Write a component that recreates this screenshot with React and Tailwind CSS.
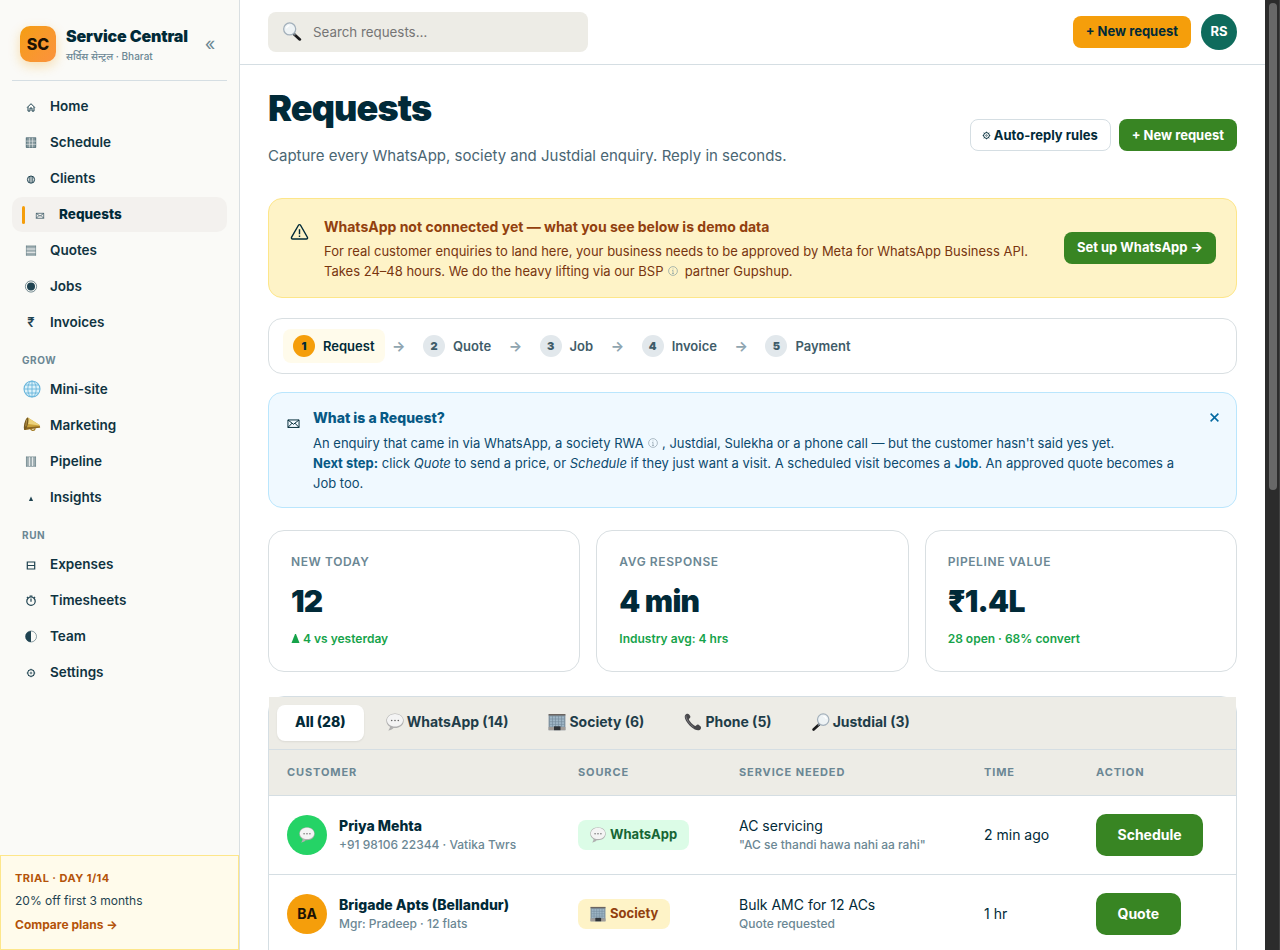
import { useState } from 'react';
import clsx from 'clsx';

function Glyph({ name, className }) {
  const shapes = {
    home: (
      <path d="M1.200 5.500 5 1.700l3.800 3.800M2 4.900v4.200h2V6h2v3.100h2V4.900" fill="none" stroke="currentColor" strokeWidth="1" />
    ),
    schedule: (
      <g stroke="currentColor" strokeWidth="0.5">
        <rect x="0.1" y="-0.2" width="9.800" height="9.800" fill="currentColor" fillOpacity="0.55" />
        <path d="M3.4-.2v9.800M6.600-.2v9.800M0 3.100h10M0 6.300h10" stroke="#fafaf7" strokeOpacity="0.75" strokeWidth="0.7" />
      </g>
    ),
    clients: (
      <g fill="none" stroke="currentColor">
        <circle cx="5" cy="5.600" r="3.600" strokeWidth="1" />
        <path d="M3.300 2.700v5.800M5 2.200v6.800M6.700 2.700v5.800" strokeWidth="0.8" />
      </g>
    ),
    mail: (
      <path d="M1.300 3.300h7.400v5H1.300zM1.300 3.300 5 6.200l3.700-2.900M1.300 8.300l2.800-2.900M8.700 8.300 5.900 5.400" fill="none" stroke="currentColor" strokeWidth="0.65" />
    ),
    quotes: (
      <g transform="translate(0 -.4)">
        <rect width="10" height="10" fill="currentColor" fillOpacity="0.42" />
        <path d="M0 .4h10M0 9.600h10M.3 0v10M9.700 0v10" stroke="currentColor" strokeOpacity=".4" strokeWidth=".6" />
        <path d="M.6 3.400h8.800M.6 6.700h8.800" stroke="#fff" strokeWidth=".8" />
      </g>
    ),
    jobs: (
      <g transform="translate(0 -.5)">
        <circle cx="5" cy="5" r="5.600" fill="none" stroke="currentColor" strokeWidth=".6" />
        <circle cx="5" cy="5" r="4" fill="currentColor" />
      </g>
    ),
    pipeline: (
      <g transform="translate(0 -.4)">
        <rect width="10" height="10" fill="currentColor" fillOpacity="0.42" />
        <path d="M.4 0v10M9.600 0v10M0 .3h10M0 9.700h10" stroke="currentColor" strokeOpacity=".4" strokeWidth=".6" />
        <path d="M3.400.6v8.800M6.600.6v8.800" stroke="#fff" strokeWidth=".8" />
      </g>
    ),
    insights: <path d="M5 3.500 7.100 7.900H2.900z" fill="currentColor" />,
    expenses: (
      <path d="M1.300 2h7.400v7H1.300zM1.300 5.500h7.400" fill="none" stroke="currentColor" strokeWidth="1.200" />
    ),
    timesheets: (
      <g fill="none" stroke="currentColor" strokeWidth="1.200">
        <circle cx="5" cy="5.200" r="4.200" />
        <path d="M5 2.600v3.200M3.600.2h2.800M.9 1.900 2 .8M9.100 1.900 8 .8" />
      </g>
    ),
    team: (
      <g transform="translate(0 -.5)">
        <circle cx="5" cy="5" r="5.500" fill="none" stroke="currentColor" strokeWidth=".5" />
        <path d="M5-.5a5.500 5.500 0 0 0 0 11z" fill="currentColor" />
      </g>
    ),
    gear: (
      <g fill="none" stroke="currentColor">
        <circle cx="5" cy="5" r="3.200" strokeWidth="1.100" />
        <circle cx="5" cy="5" r=".9" strokeWidth=".7" />
        <path d="M5 .8v1.100M5 8.100v1.100M.8 5h1.100M8.100 5h1.100M2 2l.8.800M7.200 7.200l.8.800M8 2l-.8.800M2.800 7.200l-.8.800" strokeWidth="1" />
      </g>
    ),
  };
  return (
    <svg viewBox="0 0 10 10" className={clsx('overflow-visible shrink-0', className)} aria-hidden="true">
      {shapes[name]}
    </svg>
  );
}

function Globe({ className }) {
  return (
    <svg viewBox="0 0 18 18" className={className} fill="none" aria-hidden="true">
      <circle cx="9" cy="9" r="8" fill="#d9f1fb" stroke="#4fa9d6" strokeWidth="1.100" />
      <path d="M9 1v16M1 9h16M2.500 5h13M2.500 13h13" stroke="#4fa9d6" strokeWidth=".9" />
      <ellipse cx="9" cy="9" rx="4.200" ry="7.900" stroke="#4fa9d6" strokeWidth=".9" />
    </svg>
  );
}

function Megaphone({ className }) {
  return (
    <svg viewBox="0 0 18 18" className={className} aria-hidden="true">
      <path d="M7.500 12.500c-.1 3 4 4 5 .5" fill="none" stroke="#a37c25" strokeWidth="1.300" />
      <path d="M4.500 1.500 17 9.500l.6 2.700L.8 14.800z" fill="#c9a13a" />
      <path d="M4.500 1.500 17 9.500l.1.600L5 8.500z" fill="#ecd27a" />
      <path d="m2 12.200 15.400-1.400.2 1.400L.8 14.800z" fill="#8a6520" />
      <ellipse cx="2.800" cy="8.200" rx="1.900" ry="6.800" fill="#76591f" transform="rotate(14 2.800 8.200)" />
      <path d="M3.400 3.800 2.400 11" stroke="#c8a65a" strokeWidth=".8" />
    </svg>
  );
}

function Magnifier({ className, flip }) {
  return (
    <svg viewBox="0 0 18 18" className={clsx(className, flip && '-scale-x-100')} aria-hidden="true">
      <path d="m11 11.500 5.400 5" stroke="#1b1b1d" strokeWidth="2.600" strokeLinecap="round" />
      <path d="m10 10.400 2.200 2" stroke="#77808a" strokeWidth="1.500" />
      <circle cx="6.800" cy="6.600" r="5.700" fill="#eef3f5" stroke="#a3b0bb" strokeWidth="1.200" />
      <path d="M3.700 6a3.300 3.300 0 0 1 3-2.600" fill="none" stroke="#fff" strokeWidth="1.200" />
    </svg>
  );
}

function SpeechBubble({ className }) {
  return (
    <svg viewBox="0 0 18 18" className={className} aria-hidden="true">
      <path d="M9 .4C4.200.4.3 3.500.3 7.700c0 2.600 1.500 4.800 3.700 6-.1 1.500-.9 2.900-1.900 3.700 2.200 0 4.200-1 5.400-2.500l1.500.1c4.800 0 8.700-3.100 8.700-7.300S13.800.4 9 .4z" fill="#b0b0b0" />
      <path d="M9 .9C4.500.9 1 3.700 1 7.200c0 3.500 3.500 6.300 8 6.300s8-2.800 8-6.300S13.500.9 9 .9z" fill="#f4f4f4" />
      <circle cx="5.700" cy="7.500" r=".8" fill="#666" />
      <circle cx="9" cy="7.500" r=".8" fill="#666" />
      <circle cx="12.300" cy="7.500" r=".8" fill="#666" />
    </svg>
  );
}

function OfficeBuilding({ className }) {
  return (
    <svg viewBox="0 0 18 18" className={className} aria-hidden="true">
      <path d="M.6 1.500h16.800v15.700H.6z" fill="#8295a3" />
      <path d="M.6 1h16.800v1.500H.6z" fill="#6b6460" />
      <path d="M2 3.500h14v10H2z" fill="#9fb6c6" />
      <path d="M4.500 3v11M7.500 3v11M10.500 3v11M13.500 3v11M1.500 6h15M1.500 8.700h15M1.500 11.400h15" stroke="#738a9b" strokeWidth=".6" />
      <path d="M.6 14h16.800v3.200H.6z" fill="#a19c98" />
      <path d="M6 13.300h6.500v3.900H6z" fill="#2f3338" />
    </svg>
  );
}

function Receiver({ className }) {
  return (
    <svg viewBox="0 0 18 18" className={className} aria-hidden="true">
      <path d="M2 1.200C.3 2 .3 4.700 2 7.700c2 3.500 5.300 7 8.800 8.700 2.700 1.300 5.200 1 5.900-.5.500-1.100.4-2-.3-2.700l-1.800-1.500c-.8-.6-1.600-.3-2.200.6-.6.800-1.200.9-2.200.2C8 11 6.200 8.900 5.200 7.200c-.5-1-.3-1.500.4-2 .8-.6 1-1.300.6-2.200L5.100 1.400C4.400.6 3.200.6 2 1.200z" fill="#48484b" />
      <path d="M2 2.600c-.5 2.600 3.200 8.400 7.500 11.400" fill="none" stroke="#85858a" strokeWidth=".8" />
    </svg>
  );
}

function Info({ className }) {
  return (
    <svg viewBox="0 0 10 10" fill="none" stroke="currentColor" className={clsx('inline-block w-[10px] h-[10px] relative -top-px', className)} aria-hidden="true">
      <circle cx="5" cy="5" r="4.400" strokeWidth=".8" />
      <path d="M5 4.300v3.200M5 2.500v.9M4.200 4.500H5M4 7.500h2" strokeWidth=".8" />
    </svg>
  );
}

const MAIN_NAV = [
  { label: 'Home', icon: 'home' },
  { label: 'Schedule', icon: 'schedule' },
  { label: 'Clients', icon: 'clients' },
  { label: 'Requests', icon: 'mail', active: true },
  { label: 'Quotes', icon: 'quotes' },
  { label: 'Jobs', icon: 'jobs' },
  { label: 'Invoices', icon: 'rupee' },
];
const GROW_NAV = [
  { label: 'Mini-site', icon: 'globe' },
  { label: 'Marketing', icon: 'megaphone' },
  { label: 'Pipeline', icon: 'pipeline' },
  { label: 'Insights', icon: 'insights' },
];
const RUN_NAV = [
  { label: 'Expenses', icon: 'expenses' },
  { label: 'Timesheets', icon: 'timesheets' },
  { label: 'Team', icon: 'team' },
  { label: 'Settings', icon: 'gear' },
];

const STEPS = ['Request', 'Quote', 'Job', 'Invoice', 'Payment'];

const STATS = [
  { label: 'NEW TODAY', value: '12', note: '4 vs yesterday', up: true },
  { label: 'AVG RESPONSE', value: '4 min', note: 'Industry avg: 4 hrs' },
  { label: 'PIPELINE VALUE', value: '₹1.4L', note: '28 open · 68% convert' },
];

const TABS = [
  { label: 'All (28)' },
  { label: 'WhatsApp (14)', Icon: SpeechBubble },
  { label: 'Society (6)', Icon: OfficeBuilding },
  { label: 'Phone (5)', Icon: Receiver },
  { label: 'Justdial (3)', Icon: Magnifier, flip: true },
];

const ROWS = [
  {
    name: 'Priya Mehta', detail: '+91 98106 22344 · Vatika Twrs', avatar: null,
    source: 'WhatsApp', service: 'AC servicing', note: '"AC se thandi hawa nahi aa rahi"',
    time: '2 min ago', action: 'Schedule',
  },
  {
    name: 'Brigade Apts (Bellandur)', detail: 'Mgr: Pradeep · 12 flats', avatar: 'BA',
    source: 'Society', service: 'Bulk AMC for 12 ACs', note: 'Quote requested',
    time: '1 hr', action: 'Quote',
  },
];

function NavIcon({ icon }) {
  if (icon === 'globe') return <Globe className="w-[18px] h-[18px] ml-px mb-[2px] shrink-0 opacity-85" />;
  if (icon === 'megaphone') return <Megaphone className="w-[18px] h-[17px] ml-px mb-[2px] shrink-0" />;
  if (icon === 'rupee') return <span className="text-[13px] font-semibold">₹</span>;
  return <Glyph name={icon} className="w-[10px] h-[10px]" />;
}

function NavItem({ label, icon, active }) {
  return (
    <a
      href="#"
      className={clsx(
        'flex items-center h-[35px] mb-px px-[10px] rounded-[10px] text-[13.5px]',
        active ? 'bg-[#f3f1ee] font-extrabold text-[#012a38]' : 'font-semibold text-[#0f3341]'
      )}
    >
      {active && <span className="w-[3px] h-[18px] mr-[6px] rounded-[2px] bg-[#f59e0b]" />}
      <span className="w-[18px] mr-[10px] flex items-center justify-center text-[#1f4351]">
        <NavIcon icon={icon} />
      </span>
      {label}
    </a>
  );
}

function NavHeading({ children }) {
  return (
    <div className="h-[31px] pt-[12px] px-[10px] text-[10px] leading-[14px] font-bold tracking-[0.06em] text-[#6b8794]">
      {children}
    </div>
  );
}

function Sidebar() {
  return (
    <aside className="w-[240px] h-full shrink-0 flex flex-col bg-[#fafaf7] border-r border-[#d9dfe2]">
      <div className="px-3 flex-1">
        <div className="h-[81px] pt-[7px] px-2 flex items-center border-b border-[#d5dee3]">
          <div className="w-9 h-9 rounded-[10px] bg-linear-135 from-[#f59e0b] to-[#fb923c] flex items-center justify-center text-[16px] font-extrabold text-[#1c1204] shadow-[0_4px_12px_rgba(245,158,11,0.3)]">
            SC
          </div>
          <div className="ml-[10px] pt-[3px] flex-1">
            <div className="text-[16px] leading-[20px] font-black tracking-[-0.01em] whitespace-nowrap text-[#012a38]">Service Central</div>
            <div className="text-[10px] leading-[15px] mt-[3px] font-medium text-[#6b8794]">सर्विस सेन्ट्रल · Bharat</div>
          </div>
          <button type="button" aria-label="Collapse menu" className="mr-px w-4 text-[18px] leading-none text-[#6b8794]">«</button>
        </div>
        <nav className="pt-2">
          {MAIN_NAV.map((item) => <NavItem key={item.label} {...item} />)}
          <NavHeading>GROW</NavHeading>
          {GROW_NAV.map((item) => <NavItem key={item.label} {...item} />)}
          <NavHeading>RUN</NavHeading>
          {RUN_NAV.map((item) => <NavItem key={item.label} {...item} />)}
        </nav>
      </div>
      <div className="h-[95px] px-[14px] pt-[14px] bg-[#fffbeb] border border-[#fde68a]">
        <div className="text-[11px] leading-4 font-bold tracking-[0.04em] text-[#b45309]">TRIAL · DAY 1/14</div>
        <div className="text-[12px] leading-5 mt-[5px] text-[#1f4351]">20% off first 3 months</div>
        <a href="#" className="block text-[12px] leading-5 mt-1 font-bold text-[#b45309]">Compare plans →</a>
      </div>
    </aside>
  );
}

function TopBar() {
  return (
    <header className="h-[65px] px-7 flex items-center justify-between bg-white border-b border-[#d5dee3]">
      <div className="w-[320px] h-10 px-[14px] flex items-center rounded-[8px] bg-[#edece6]">
        <Magnifier className="w-[20px] h-[19px] mb-px mr-[11px]" />
        <input placeholder="Search requests…" className="flex-1 pt-px bg-transparent outline-none text-[13.333px] placeholder:text-[#757575]" />
      </div>
      <div className="flex items-center gap-[10px]">
        <button type="button" className="h-8 px-[13px] rounded-[8px] bg-[#f59e0b] text-[13px] font-bold text-[#012a38]">+ New request</button>
        <div className="w-9 h-9 rounded-full bg-[#0f6b5c] flex items-center justify-center text-[13px] font-bold text-white">RS</div>
      </div>
    </header>
  );
}

function PageHeader() {
  return (
    <div className="h-[133px] flex justify-between">
      <div>
        <h1 className="mt-[22px] text-[36px] leading-[43px] font-black tracking-[-0.025em] text-[#012a38]">Requests</h1>
        <p className="mt-[14px] text-[15px] leading-6 text-[#4a6673]">
          Capture every WhatsApp, society and Justdial enquiry. Reply in seconds.
        </p>
      </div>
      <div className="mt-[54px] flex gap-2">
        <button type="button" className="h-8 pl-[11px] pr-[12px] pt-px flex items-center rounded-[8px] border border-[#d5dee3] bg-white text-[13px] font-bold text-[#012a38]">
          <Glyph name="gear" className="w-[9px] h-[9px] mr-[3px]" />
          Auto-reply rules
        </button>
        <button type="button" className="h-8 px-[13px] pt-px rounded-[8px] bg-[#388523] text-[13px] font-bold text-white">+ New request</button>
      </div>
    </div>
  );
}

function SetupBanner() {
  return (
    <section className="h-[100px] px-5 flex items-center rounded-[14px] border border-[#fde68a] bg-[#fef3c7]">
      <svg viewBox="0 0 20 18" className="w-[19px] h-[18px] ml-px mb-8 mr-[15px] shrink-0" fill="none" stroke="#012a38" strokeWidth="1.500" strokeLinejoin="round">
        <path d="M8.900 1.900 1.700 14.500c-.5.900 0 1.900 1 1.900h14.600c1 0 1.500-1 1-1.900L11.100 1.900c-.5-.9-1.700-.9-2.200 0z" />
        <path d="M10 6v5.300M10 12.800v1.500" />
      </svg>
      <div className="flex-1">
        <div className="text-[14px] leading-5 font-bold text-[#92400e]">WhatsApp not connected yet — what you see below is demo data</div>
        <p className="mt-1 -mb-px w-[720px] text-[13px] leading-5 text-[#78350f]">
          For real customer enquiries to land here, your business needs to be approved by Meta for WhatsApp Business API.
          <br />
          Takes 24–48 hours. We do the heavy lifting via our BSP <Info className="text-[#94a8a4] ml-px mr-[3px]" /> partner Gupshup.
        </p>
      </div>
      <button type="button" className="h-8 px-[13px] rounded-[8px] bg-[#388523] text-[13px] font-bold text-white">Set up WhatsApp →</button>
    </section>
  );
}

function Stepper() {
  return (
    <section className="mt-5 h-[56px] px-[14px] flex items-center rounded-[14px] border border-[#d9dfe2] bg-white">
      {STEPS.map((step, i) => (
        <div key={step} className="flex items-center">
          {i > 0 && <span className="w-[28.500px] pb-px text-center text-[14px] leading-5 font-bold text-[#8fa5b0]">→</span>}
          <div
            className={clsx(
              'h-[34px] px-[10px] flex items-center gap-2 rounded-[8px] text-[13px] font-semibold',
              i === 0 ? 'bg-[#fffbeb] text-[#012a38]' : 'text-[#3f5c69]'
            )}
          >
            <span
              className={clsx(
                'w-[22px] h-[22px] rounded-full flex items-center justify-center text-[11px] font-black',
                i === 0 ? 'bg-[#f59e0b] text-[#012a38]' : 'bg-[#e2e8ec] text-[#3f5c69]'
              )}
            >
              {i + 1}
            </span>
            <span className="pt-px">{step}</span>
          </div>
        </div>
      ))}
    </section>
  );
}

function Explainer({ onClose }) {
  return (
    <section className="mt-[18px] h-[116px] pl-[17px] pr-[16px] pt-[15px] flex rounded-[14px] border border-[#bae6fd] bg-[#f0f9ff]">
      <Glyph name="mail" className="w-[15px] h-[15px] mt-[7px] mr-[12px] text-[#012a38]" />
      <div className="flex-1">
        <div className="text-[14px] leading-5 font-extrabold text-[#075985]">What is a Request?</div>
        <p className="mt-[5px] text-[13px] leading-5 text-[#0c4a6e]">
          An enquiry that came in via WhatsApp, a society RWA <Info className="text-[#9aabb6] ml-px" /> , Justdial, Sulekha or a phone call — but the customer hasn't said yes yet.
          <br />
          <strong className="font-bold text-[#075985]">Next step:</strong> click <em>Quote</em> to send a price, or <em>Schedule</em> if they just want a visit. A scheduled visit becomes a{' '}
          <strong className="font-bold text-[#0369a1]">Job</strong>. An approved quote becomes a
          <br />
          Job too.
        </p>
      </div>
      <button type="button" aria-label="Close" onClick={onClose} className="w-3 h-[18px] flex items-center justify-center">
        <svg viewBox="0 0 10 10" className="w-[9px] h-[9px]" stroke="#0369a1" strokeWidth="1.700"><path d="m.7.700 8.600 8.600M9.300.700.7 9.300" /></svg>
      </button>
    </section>
  );
}

function StatCard({ label, value, note, up }) {
  return (
    <div className="h-[142px] px-[22px] pt-[21px] rounded-[16px] border border-[#d9dfe2] bg-white">
      <div className="text-[12px] leading-5 font-semibold tracking-[0.05em] text-[#6b8794]">{label}</div>
      <div className="mt-[9px] text-[30px] leading-[40px] font-black tracking-[-0.025em] text-[#012a38]">{value}</div>
      <div className="mt-[8px] flex items-center text-[12px] leading-5 font-semibold text-[#16a34a]">
        {up && (
          <svg viewBox="0 0 9 9" className="w-[9px] h-[9px] mb-px mr-[3px]" fill="currentColor" aria-hidden="true">
            <path d="M4 0h1l3.500 9h-8z" />
          </svg>
        )}
        {note}
      </div>
    </div>
  );
}

function RequestsTable() {
  const [tab, setTab] = useState(TABS[0].label);
  return (
    <section className="mt-6 pb-6 rounded-[16px] border border-[#d5dee3] bg-white">
      <div className="h-[53px] px-2 flex items-center gap-1 border-b border-[#d5dee3] bg-[#edece6]">
        {TABS.map(({ label, Icon, flip }) => (
          <button
            key={label}
            type="button"
            onClick={() => setTab(label)}
            className={clsx(
              'h-9 px-[18px] pb-[3px] flex items-center rounded-[8px] text-[14px]',
              tab === label ? 'bg-white font-extrabold text-[#012a38] shadow-[0_1px_2px_rgba(0,0,0,0.08)]' : 'font-bold text-[#1f3d49]'
            )}
          >
            {Icon && <Icon className="w-[18px] h-[18px] mr-[3px]" flip={flip} />}
            {label}
          </button>
        ))}
      </div>
      <table className="w-full table-fixed border-collapse text-left">
        <colgroup>
          <col className="w-[291px]" />
          <col className="w-[161px]" />
          <col className="w-[245px]" />
          <col className="w-[112px]" />
          <col />
        </colgroup>
        <thead>
          <tr className="h-[45px] bg-[#edece6] border-b border-[#d5dee3] text-[11px] tracking-[0.08em] text-[#6b8794]">
            {['CUSTOMER', 'SOURCE', 'SERVICE NEEDED', 'TIME', 'ACTION'].map((head) => (
              <th key={head} className="px-[18px] font-bold">{head}</th>
            ))}
          </tr>
        </thead>
        <tbody>
          {ROWS.map((row) => (
            <tr key={row.name} className="h-[79px] border-b border-[#d5dee3] text-[14px] text-[#012a38]">
              <td className="px-[18px]">
                <div className="flex items-center gap-3">
                  <div
                    className={clsx(
                      'w-10 h-10 rounded-full flex items-center justify-center text-[14px] font-bold text-[#1c1204]',
                      row.avatar ? 'bg-[#f59e0b]' : 'bg-[#25d366]'
                    )}
                  >
                    {row.avatar || <SpeechBubble className="w-4 h-4" />}
                  </div>
                  <div>
                    <div className="leading-5 font-extrabold">{row.name}</div>
                    <div className="text-[12px] leading-[18px] font-medium text-[#6b8794]">{row.detail}</div>
                  </div>
                </div>
              </td>
              <td className="px-[18px]">
                <span
                  className={clsx(
                    'inline-flex h-[30px] px-3 pt-px items-center rounded-[8px] text-[13px] font-bold whitespace-nowrap align-middle',
                    row.source === 'WhatsApp' ? 'bg-[#dcfce7] text-[#166534]' : 'bg-[#fef3c7] text-[#92400e]'
                  )}
                >
                  {row.source === 'WhatsApp'
                    ? <SpeechBubble className="w-4 h-4 mr-1" />
                    : <OfficeBuilding className="w-4 h-4 mr-1" />}
                  {row.source}
                </span>
              </td>
              <td className="px-[18px]">
                <div className="leading-5">{row.service}</div>
                <div className="text-[12px] leading-[18px] font-medium whitespace-nowrap text-[#6b8794]">{row.note}</div>
              </td>
              <td className="px-[18px]">{row.time}</td>
              <td className="px-[18px]">
                <button type="button" className="h-[42px] px-[21.500px] rounded-[10px] bg-[#388523] text-[14px] font-bold text-white align-middle">{row.action}</button>
              </td>
            </tr>
          ))}
        </tbody>
      </table>
    </section>
  );
}

export default function App() {
  const [showHelp, setShowHelp] = useState(true);
  return (
    <div className="w-[1280px] h-[950px] flex overflow-hidden bg-white font-['Inter','Noto_Sans',sans-serif]">
      <Sidebar />
      <div className="flex-1 min-w-0 h-full overflow-hidden">
        <TopBar />
        <main className="px-7">
          <PageHeader />
          <SetupBanner />
          <Stepper />
          {showHelp && <Explainer onClose={() => setShowHelp(false)} />}
          <div className="mt-[22px] grid grid-cols-3 gap-4">
            {STATS.map((stat) => <StatCard key={stat.label} {...stat} />)}
          </div>
          <RequestsTable />
        </main>
      </div>
      {/* Scroll track */}
      <div className="w-[15px] h-full pt-[3px] pl-1 bg-[#2c2c2c] border-r border-[#424242]">
        <div className="w-2 h-[487px] rounded-full bg-[#686868]" />
      </div>
    </div>
  );
}
